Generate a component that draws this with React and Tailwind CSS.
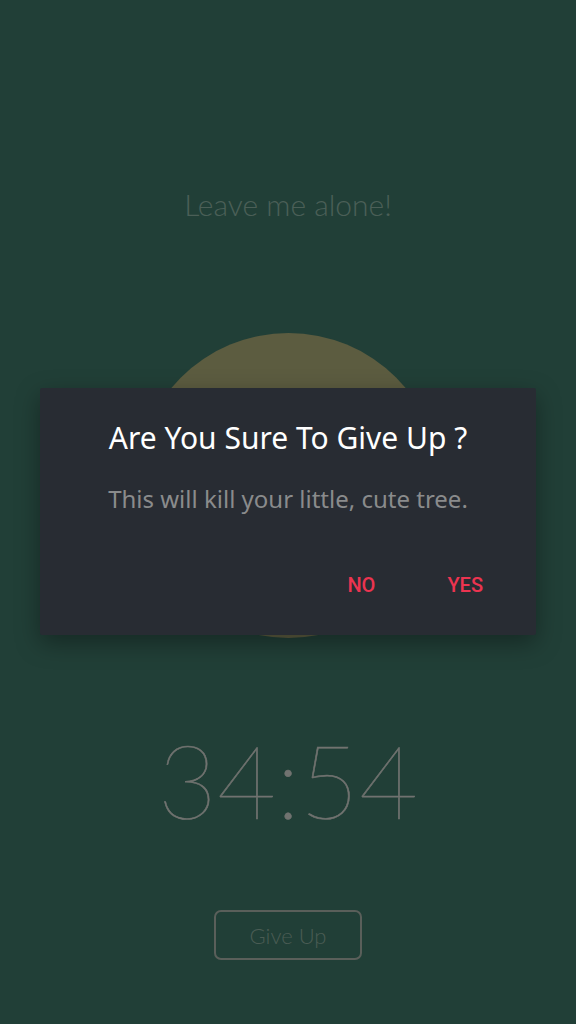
export default function App() {
  return (
    <div className="relative w-[576px] h-[1024px] overflow-hidden bg-[#213f37]" style={{ fontFamily: "Lato, sans-serif" }}>
      {/* Timer screen */}
      <div className="flex flex-col items-center">
        <div className="mt-[184px] h-[40px] text-[30px] leading-[40px] font-light text-[#4b5f57]">Leave me alone!</div>
        <div className="mt-[109px] w-[305px] h-[305px] rounded-full bg-[#5c5c40]" />
        <div className="mt-[82px] h-[120px] text-[102px] leading-[120px] font-thin text-[#717370] [-webkit-text-stroke:0.6px_#717370]">34:54</div>
        <button className="mt-[70px] w-[148px] h-[50px] rounded-[7px] border-2 border-[#5a5f5a] text-[22px] font-light text-[#4a5c54]">Give Up</button>
      </div>

      {/* Confirmation dialog */}
      <div className="absolute left-[40px] top-[388px] w-[496px] h-[247px] bg-[#282c33] rounded-[2px] shadow-[0_8px_24px_rgba(0,0,0,0.35)] flex flex-col" style={{ fontFamily: "'Noto Sans', sans-serif" }}>
        <div className="mt-[30px] text-center text-[30px] leading-[40px] text-white">Are You Sure To Give Up ?</div>
        <div className="mt-[25px] text-center text-[24px] leading-[32px] text-[#8a8b8c]">This will kill your little, cute tree.</div>
        <div className="mt-auto mb-[35px] flex justify-end gap-[72px] pr-[53px] text-[20px] font-medium text-[#ec3450]" style={{ fontFamily: "Roboto, sans-serif" }}>
          <span>NO</span>
          <span>YES</span>
        </div>
      </div>
    </div>
  );
}
